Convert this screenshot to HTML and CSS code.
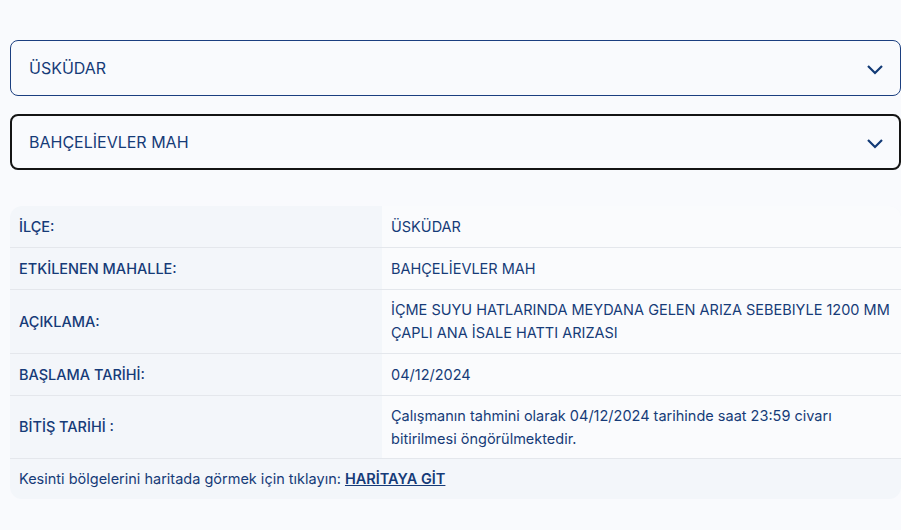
FILE: index.html
```html
<!DOCTYPE html>
<html lang="tr">
<head>
  <meta charset="UTF-8" />
  <meta name="viewport" content="width=device-width, initial-scale=1.0"/>
  <title>Arıza Kesinti Bilgisi</title>
  <link rel="stylesheet" href="styles.css">
</head>
<body>
  <div class="page">
    <div class="select-box">
      <span class="select-value">ÜSKÜDAR</span>
      <svg class="chevron" width="18" height="12" viewBox="0 0 18 12"><path d="M2 3 L9 10 L16 3" fill="none" stroke="#123a76" stroke-width="2.2"/></svg>
    </div>
    <div class="select-box active">
      <span class="select-value">BAHÇELİEVLER MAH</span>
      <svg class="chevron" width="18" height="12" viewBox="0 0 18 12"><path d="M2 3 L9 10 L16 3" fill="none" stroke="#123a76" stroke-width="2.2"/></svg>
    </div>

    <div class="info-table">
      <div class="row">
        <div class="label">İLÇE:</div>
        <div class="value">ÜSKÜDAR</div>
      </div>
      <div class="row">
        <div class="label">ETKİLENEN MAHALLE:</div>
        <div class="value">BAHÇELİEVLER MAH</div>
      </div>
      <div class="row">
        <div class="label">AÇIKLAMA:</div>
        <div class="value">İÇME SUYU HATLARINDA MEYDANA GELEN ARIZA SEBEBIYLE 1200 MM ÇAPLI ANA İSALE HATTI ARIZASI</div>
      </div>
      <div class="row">
        <div class="label">BAŞLAMA TARİHİ:</div>
        <div class="value">04/12/2024</div>
      </div>
      <div class="row">
        <div class="label">BİTİŞ TARİHİ :</div>
        <div class="value">Çalışmanın tahmini olarak 04/12/2024 tarihinde saat 23:59 civarı bitirilmesi öngörülmektedir.</div>
      </div>
      <div class="map-row">Kesinti bölgelerini haritada görmek için tıklayın: <a href="#">HARİTAYA GİT</a></div>
    </div>
  </div>
</body>
</html>
```

FILE: styles.css
```css
body {
  margin: 0;
  background: #f9fafd;
  font-family: "Inter", "Noto Sans", sans-serif;
  color: #163b78;
}
.page {
  width: 891px;
  margin-left: 10px;
  padding-top: 40px;
}
.select-box {
  height: 56px;
  box-sizing: border-box;
  border: 1px solid #1c3f80;
  border-radius: 8px;
  display: flex;
  align-items: center;
  justify-content: space-between;
  padding: 0 16px 0 18px;
  margin-bottom: 18px;
  background: #f9fafd;
}
.select-box.active {
  border: 2px solid #141414;
  padding-left: 17px;
  padding-right: 15px;
}
.select-value {
  font-size: 16px;
  font-weight: 400;
}
.chevron {
  display: block;
  margin-top: 1px;
}
.info-table {
  margin-top: 36px;
  border-radius: 12px;
  overflow: hidden;
  background: #f3f6fa;
  font-size: 14.5px;
  line-height: 23px;
}
.row {
  display: grid;
  grid-template-columns: 372px 1fr;
  border-bottom: 1px solid #e4e7ec;
}
.label {
  display: flex;
  align-items: center;
  padding: 9px 9px;
  font-weight: 500;
}
.value {
  display: flex;
  align-items: center;
  background: #fafbfd;
  padding: 8.25px 9px;
}
.map-row {
  padding: 8px 9px 9px;
  font-size: 14.5px;
}
.map-row a {
  color: #163b78;
  font-weight: 600;
  text-decoration: underline;
}
```
